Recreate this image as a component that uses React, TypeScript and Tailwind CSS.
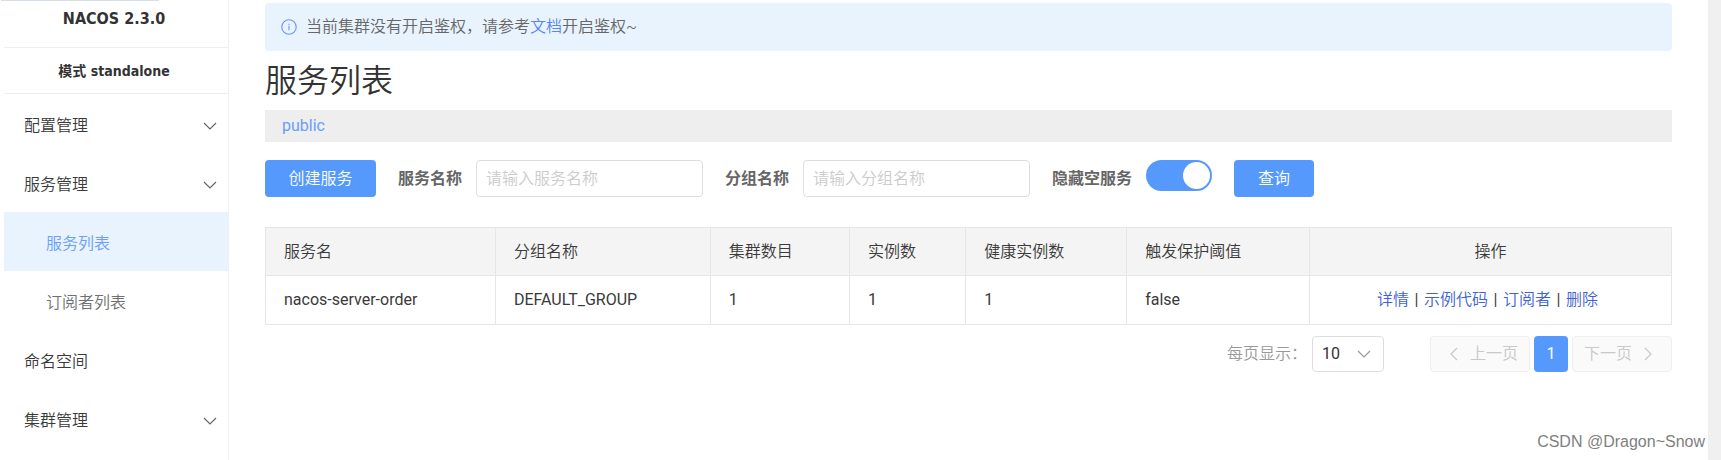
import { useState } from 'react';

const menu = [
  { label: '配置管理', expandable: true },
  { label: '服务管理', expandable: true },
  { label: '服务列表', child: true, active: true },
  { label: '订阅者列表', child: true },
  { label: '命名空间' },
  { label: '集群管理', expandable: true },
];

const columns = [
  { title: '服务名', width: '16.35%' },
  { title: '分组名称', width: '15.28%' },
  { title: '集群数目', width: '9.91%' },
  { title: '实例数', width: '8.27%' },
  { title: '健康实例数', width: '11.44%' },
  { title: '触发保护阈值', width: '13.01%' },
];

const services = [
  { name: 'nacos-server-order', group: 'DEFAULT_GROUP', clusters: 1, instances: 1, healthy: 1, threshold: 'false' },
];

const actions = ['详情', '示例代码', '订阅者', '删除'];

function Chevron({ className, d }: { className: string; d: string }) {
  return (
    <svg viewBox="0 0 14 14" className={className} fill="none" stroke="currentColor" strokeWidth="1.2" aria-hidden="true">
      <path d={d} />
    </svg>
  );
}

const DOWN = 'M1 4l6 6 6-6';
const LEFT = 'M10 1L4 7l6 6';
const RIGHT = 'M4 1l6 6-6 6';

function Sidebar() {
  return (
    <aside className="ml-1 w-[225px] shrink-0 border-r border-[#f0f0f0]">
      <h1 className="h-12 border-b border-[#eeeeee] pt-[7px] pr-1 text-center font-['DejaVu_Sans_Condensed','Noto_Sans_CJK_SC',sans-serif] text-base leading-6 font-bold text-[#333333]">
        NACOS 2.3.0
      </h1>
      <p className="h-[46px] border-b border-[#eeeeee] pr-1 text-center font-['DejaVu_Sans_Condensed','Noto_Sans_CJK_SC',sans-serif] text-sm leading-[46px] font-bold text-[#333333]">
        模式 standalone
      </p>
      <nav>
        <ul>
          {menu.map(item => (
            <li key={item.label}>
              <a
                href="#"
                className={`flex h-[59px] items-center justify-between pt-1 pr-[11px] ${item.child ? 'pl-[42px]' : 'pl-5'} ${
                  item.active ? 'bg-[#e8f3fe] text-[#6a9dfc]' : item.child ? 'text-[#707070]' : 'text-[#3a3a3a]'
                }`}
              >
                {item.label}
                {item.expandable && <Chevron className="size-3.5 text-[#666666]" d={DOWN} />}
              </a>
            </li>
          ))}
        </ul>
      </nav>
    </aside>
  );
}

function SearchForm() {
  const [name, setName] = useState('');
  const [group, setGroup] = useState('');
  const [hideEmpty, setHideEmpty] = useState(true);

  const inputClass =
    'mr-[22px] h-[37px] w-[227px] rounded border border-[#dddddd] px-[9px] text-[#333333] outline-none placeholder:text-[#cccccc]';

  return (
    <form className="mt-[18px] flex items-center" onSubmit={e => e.preventDefault()}>
      <button type="button" className="mr-[22px] h-[37px] w-[111px] rounded bg-[#5699fc] text-white">
        创建服务
      </button>
      <label htmlFor="name" className="mr-3.5 font-bold text-[#666666]">服务名称</label>
      <input id="name" className={inputClass} placeholder="请输入服务名称" value={name} onChange={e => setName(e.target.value)} />
      <label htmlFor="group" className="mr-3.5 font-bold text-[#666666]">分组名称</label>
      <input id="group" className={inputClass} placeholder="请输入分组名称" value={group} onChange={e => setGroup(e.target.value)} />
      <label htmlFor="hide-empty" className="mr-3.5 font-bold text-[#666666]">隐藏空服务</label>
      <input
        id="hide-empty"
        type="checkbox"
        role="switch"
        checked={hideEmpty}
        onChange={e => setHideEmpty(e.target.checked)}
        className="mr-[22px] flex h-[31px] w-[66px] appearance-none items-center self-start rounded-full bg-[#cccccc] px-0.5 before:size-[27px] before:rounded-full before:bg-white before:content-[''] checked:justify-end checked:bg-[#5699fc]"
      />
      <button type="submit" className="h-[37px] w-20 rounded bg-[#5699fc] text-white">查询</button>
    </form>
  );
}

function ServiceTable() {
  return (
    <table className="mt-[30px] w-full table-fixed border-collapse text-left text-[#3a3a3a]">
      <colgroup>
        {columns.map(c => <col key={c.title} style={{ width: c.width }} />)}
        <col />
      </colgroup>
      <thead className="bg-[#f4f4f4]">
        <tr className="h-12">
          {columns.map(c => (
            <th key={c.title} className="border border-[#e6e6e6] px-[18px] font-[350]">{c.title}</th>
          ))}
          <th className="border border-[#e6e6e6] text-center font-[350]">操作</th>
        </tr>
      </thead>
      <tbody>
        {services.map(s => (
          <tr key={s.name} className="h-[49px]">
            {Object.entries(s).map(([key, value]) => (
              <td key={key} className="border border-[#e6e6e6] px-[18px] font-normal">{value}</td>
            ))}
            <td className="border border-[#e6e6e6] pr-1.5 text-center">
              {actions.map((a, i) => (
                <span key={a}>
                  {i > 0 && <span className="inline-block w-[15px] font-normal">|</span>}
                  <a href="#" className="text-[#3d63d2]">{a}</a>
                </span>
              ))}
            </td>
          </tr>
        ))}
      </tbody>
    </table>
  );
}

function Pagination() {
  const [pageSize, setPageSize] = useState('10');
  const stepClass = 'flex h-9 w-[100px] items-center gap-[9px] rounded border border-[#eeeeee] bg-[#fafafa] px-[11px] text-[#c8c8c8]';

  return (
    <div className="mt-[11px] flex items-center justify-end">
      <label htmlFor="page-size" className="mr-[5px] text-[#999999]">每页显示：</label>
      <div className="relative mr-[46px]">
        <select
          id="page-size"
          value={pageSize}
          onChange={e => setPageSize(e.target.value)}
          className="h-9 w-[72px] appearance-none rounded border border-[#dddddd] bg-white pl-[9px] font-normal text-[#333333]"
        >
          <option>10</option>
          <option>20</option>
          <option>50</option>
        </select>
        <Chevron className="pointer-events-none absolute top-[11px] right-[13px] size-3.5 text-[#999999]" d={DOWN} />
      </div>
      <div className="flex gap-1">
        <button disabled className={`${stepClass} justify-end`}>
          <Chevron className="size-3.5" d={LEFT} />
          上一页
        </button>
        <button className="h-9 w-[34px] rounded bg-[#5699fc] font-normal text-white">1</button>
        <button disabled className={stepClass}>
          下一页
          <Chevron className="size-3.5" d={RIGHT} />
        </button>
      </div>
    </div>
  );
}

export default function App() {
  return (
    <div className="relative flex min-h-screen bg-white font-['Roboto','Noto_Sans_CJK_SC',sans-serif] text-base font-[350]">
      <div className="absolute top-0 left-px h-px w-[158px] bg-[#d5dfe9]" />
      <Sidebar />
      <main className="ml-9 min-w-0 flex-1 pt-[3px] pr-9">
        <div className="flex h-12 items-center gap-[9px] rounded bg-[#e8f3fe] px-4 text-[#666666]">
          <svg viewBox="0 0 16 16" className="size-4 text-[#6f8fff]" fill="none" stroke="currentColor" aria-hidden="true">
            <circle cx="8" cy="8" r="7.2" strokeWidth="1.1" />
            <path d="M8 6.8v4.4M8 4.7v1.2" strokeWidth="1.1" />
          </svg>
          <p>
            当前集群没有开启鉴权，请参考<a href="#" className="text-[#5584ff]">文档</a>开启鉴权~
          </p>
        </div>
        <h2 className="mt-[9px] h-[50px] text-[32px] leading-[42px] text-[#333333]">服务列表</h2>
        <div className="h-8 bg-[#eeeeee] px-[17px] leading-8">
          <a href="#" className="font-normal text-[#6a9dfa]">public</a>
        </div>
        <SearchForm />
        <ServiceTable />
        <Pagination />
      </main>
      <div className="w-[13px] shrink-0 bg-[#f0f0f0]" />
      <div className="absolute right-4 bottom-1.5 font-['Liberation_Sans',sans-serif] text-[#808080]">CSDN @Dragon~Snow</div>
    </div>
  );
}
